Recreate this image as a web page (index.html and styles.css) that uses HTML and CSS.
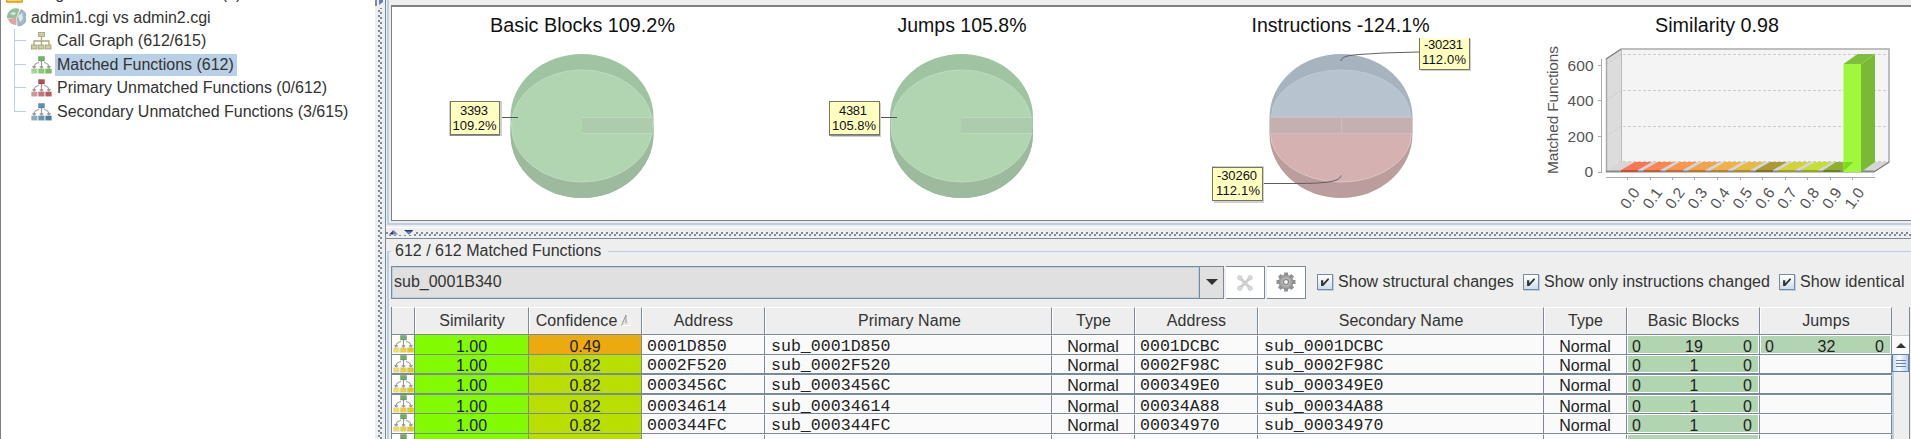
FILE: index.html
```html
<!DOCTYPE html>
<html lang="en">
<head>
<meta charset="utf-8">
<title>Matched Functions</title>
<link rel="stylesheet" href="styles.css">
</head>
<body>
<svg class="defs" aria-hidden="true">
  <defs>
    <symbol id="tree" viewBox="0 0 21 18">
      <path d="M10.5 5v7M8 6.5C5 7 3.300 8.500 3 11M13 6.500c3 .5 4.700 2 5 4.500M1.500 10 3 12l2-1.500M8.800 10.500l1.700 1.500 1.700-1.500M16 10.500l2 1.500 1.500-2" fill="none" stroke="#999" stroke-width="1.200"/>
      <rect x="7.500" y=".5" width="6" height="4.500" fill="currentColor" stroke="#0003" stroke-width=".8"/>
      <g stroke="#0002" stroke-width=".6"><rect x=".5" y="12.800" width="5.800" height="4.500" opacity=".65"/><rect x="7.500" y="12.800" width="5.800" height="4.500" opacity=".85"/><rect x="14.500" y="12.800" width="6" height="4.500"/></g>
    </symbol>
    <symbol id="callgraph" viewBox="0 0 21 18">
      <path d="M10.500 5v8M3 13V9h15v4" fill="none" stroke="#a9a878" stroke-width="1.300"/>
      <g fill="#cfcfa4" stroke="#9c9c72" stroke-width=".8"><rect x="7.500" y=".5" width="6" height="4"/><rect x=".5" y="13" width="5.500" height="4"/><rect x="7.500" y="13" width="5.500" height="4"/><rect x="14.500" y="13" width="5.500" height="4"/></g>
    </symbol>
    <symbol id="check" viewBox="0 0 16 16"><path d="M3.500 6h2.500v3.500L11 4h1.500v1.500L6 12.500H3.500z" fill="#333"/></symbol>
  </defs>
</svg>
<div class="app">
  <nav class="tree">
    <div class="node node-top"><svg class="folder" viewBox="0 0 17 16"><rect x=".5" y="1" width="16" height="14" rx="1" fill="#fbd66a" stroke="#e2921b" stroke-width="1.500"/></svg><span>Single Function Diff Views (0)</span></div>
    <div class="node root"><svg class="globe" viewBox="0 0 19 19"><path d="M9 9.500 0.500 10A8.500 8.500 0 0 1 12 1.200z" fill="#8fc397" stroke="#7aa583" stroke-width=".6"/><path d="M9.500 9.500V17A8 8 0 0 1 1 11z" fill="#e0a3a8"/><path d="M10.500 9.500 14 1.500A8.500 8.500 0 0 1 11 18z" fill="#9fb9c6" stroke="#8195a0" stroke-width=".6"/><path d="M3 6q3-3 6-1l-2 2zM11 8l4-3 1 6-3 3z" fill="#dcebe6"/></svg><span>admin1.cgi vs admin2.cgi</span></div>
    <div class="kids">
      <div class="node kid"><svg class="ico"><use href="#callgraph"/></svg><span>Call Graph (612/615)</span></div>
      <div class="node kid green"><svg class="ico"><use href="#tree"/></svg><span class="selected">Matched Functions (612)</span></div>
      <div class="node kid red"><svg class="ico"><use href="#tree"/></svg><span>Primary Unmatched Functions (0/612)</span></div>
      <div class="node kid blue"><svg class="ico"><use href="#tree"/></svg><span>Secondary Unmatched Functions (3/615)</span></div>
    </div>
  </nav>
  <div class="vsplit"><svg width="9" height="8" viewBox="0 0 9 8"><path d="M1 0v6" stroke="#223" /><path d="M4 0v5l4-3V0z" fill="#5f80c0"/></svg></div>
  <main>
    <section class="charts-pane">
      <div class="charts">
        <svg class="chart" viewBox="392 7 380 213">
          <text class="title" x="490" y="32" textLength="185" lengthAdjust="spacingAndGlyphs">Basic Blocks 109.2%</text>
          <path d="M510.500 117a71.500 63 0 0 1 143 0v17a71.500 64 0 0 1-143 0z" fill="#a0c4a2"/>
          <path d="M510.500 125v9a71.500 64 0 0 0 143 0v-9z" fill="#9dba9e"/>
          <ellipse cx="582" cy="126" rx="70.500" ry="56" fill="#b0d5b0" stroke="#bfdcc0"/>
          <path d="M582 117h70.500v16H582z" fill="#adcbad"/><path d="M653 117.500h-71M653 133.500h-71" stroke="#bddabd"/>
          <path d="M500 117.500h18" stroke="#555"/>
          <rect x="449" y="101" width="53" height="35" fill="#d0d0d0"/>
          <rect x="450.500" y="101.500" width="49" height="33" fill="#ffffc0" stroke="#77775f"/><path d="M450 135h50" stroke="#777" stroke-width="1.500"/>
          <text class="tip" x="460" y="115" textLength="28">3393</text><text class="tip" x="452.500" y="130" textLength="44">109.2%</text>
        </svg>
        <svg class="chart" viewBox="772 7 380 213">
          <text class="title" x="897.500" y="32" textLength="129" lengthAdjust="spacingAndGlyphs">Jumps 105.8%</text>
          <path d="M890 117a71.500 63 0 0 1 143 0v17a71.500 64 0 0 1-143 0z" fill="#a0c4a2"/>
          <path d="M890 125v9a71.500 64 0 0 0 143 0v-9z" fill="#9dba9e"/>
          <ellipse cx="961.500" cy="126" rx="70.500" ry="56" fill="#b0d5b0" stroke="#bfdcc0"/>
          <path d="M961.500 117h70.500v16h-70.500z" fill="#adcbad"/><path d="M1033 117.500h-71M1033 133.500h-71" stroke="#bddabd"/>
          <path d="M880 117.500h17" stroke="#555"/>
          <rect x="831" y="103" width="50" height="34" fill="#d0d0d0"/>
          <rect x="829.500" y="101.500" width="50" height="33" fill="#ffffc0" stroke="#77775f"/><path d="M829 135h51" stroke="#777" stroke-width="1.500"/>
          <text class="tip" x="839" y="115" textLength="28">4381</text><text class="tip" x="832" y="130" textLength="44">105.8%</text>
        </svg>
        <svg class="chart" viewBox="1152 7 380 213">
          <text class="title" x="1251.500" y="32" textLength="178" lengthAdjust="spacingAndGlyphs">Instructions -124.1%</text>
          <path d="M1269.500 117a71.500 63 0 0 1 143 0z" fill="#a7b3bf"/>
          <path d="M1269.500 117h143v17a71.500 64 0 0 1-143 0z" fill="#bb9d9e"/>
          <path d="M1271.500 117a69.500 47 0 0 1 139 0z" fill="#b7c3cf" stroke="#c0cad4"/>
          <path d="M1270.500 133a70.500 49 0 0 0 141 0z" fill="#d5b1b1" stroke="#dfc6c6"/>
          <path d="M1270 118h142v15h-142z" fill="#c5afb1"/><path d="M1269.500 117.500h143M1269.500 133.500h143M1341.500 118v15" stroke="#ccbdc0"/>
          <path d="M1341 61c1-7 16-6 42-8l36-1M1263 183.500h30c28 0 47-1 48-8" fill="none" stroke="#605c5c"/>
          <path d="M1421 39h50v32h-50z" fill="#d0d0d0"/><path d="M1419 38.500h51v31h-51z" fill="#ffffc0"/><path d="M1419.500 38v31.500h50V38" fill="none" stroke="#77775f"/>
          <text class="tip" x="1424" y="49" textLength="39">-30231</text><text class="tip" x="1422" y="64" textLength="44">112.0%</text>
          <path d="M1212 166h52v37h-50z" fill="#d0d0d0"/><rect x="1212.500" y="167.500" width="50" height="33" fill="#ffffc0" stroke="#77775f"/>
          <text class="tip" x="1217" y="180" textLength="40">-30260</text><text class="tip" x="1216" y="195" textLength="44">112.1%</text>
        </svg>
        <svg class="chart" viewBox="1532 7 380 213">
          <text class="title" x="1655" y="32" textLength="124" lengthAdjust="spacingAndGlyphs">Similarity 0.98</text>
          <path d="M1621 49h268v113h-268z" fill="#f4f4f4"/><path d="M1606 59l15-10v113l-15 10z" fill="#dcdcdc"/><path d="M1606 172l15-10h268l-15 10z" fill="#d6d6d6"/>
          <g fill="none" stroke="#ccc" stroke-dasharray="3 2"><path d="M1606 171.500l15-10h268M1606 136.500l15-10h268M1606 100.500l15-10h268M1606 64.500l15-10h268" /></g>
          <path d="M1606.500 172V59l15-10H1889v113l-15 10" fill="none" stroke="#aaa" stroke-width="1.500"/><path d="M1606 59l15-10M1874 172l15-10" stroke="#777"/><path d="M1621.500 49v113" stroke="#bbb"/>
          <path d="M1606 171.500h268" stroke="#888" stroke-width="2"/>
          <g>
            <path fill="#fa7650" d="M1621 170l14-8h17l-14 8z"/><path fill="#fa8650" d="M1643.500 170l14-8h17l-14 8z"/><path fill="#fa9650" d="M1666 170l14-8h17l-14 8z"/><path fill="#f5a34b" d="M1688.500 170l14-8h17l-14 8z"/><path fill="#f0b148" d="M1711 170l14-8h17l-14 8z"/><path fill="#e6bb42" d="M1733.500 170l14-8h17l-14 8z"/><path fill="#aa9936" d="M1756 170l14-8h17l-14 8z"/><path fill="#d2d23a" d="M1778.500 170l14-8h17l-14 8z"/><path fill="#c6de36" d="M1801 170l14-8h17l-14 8z"/><path fill="#8eae34" d="M1822 171l14-9h17l-10 9z"/>
          </g>
          <g stroke-width="2"><path stroke="#bd5339" d="M1621 171h17"/><path stroke="#bd6139" d="M1643.500 171h17"/><path stroke="#bd6d39" d="M1666 171h17"/><path stroke="#b87835" d="M1688.500 171h17"/><path stroke="#b48233" d="M1711 171h17"/><path stroke="#ad8b30" d="M1733.500 171h17"/><path stroke="#807327" d="M1756 171h17"/><path stroke="#9e9e2b" d="M1778.500 171h17"/><path stroke="#94a628" d="M1801 171h17"/><path stroke="#698226" d="M1823.500 171h17"/></g>
          <path d="M1843.500 64l14-10H1875l-13 10z" fill="#80bc3e"/><path d="M1861 64l14-10v108l-14 10z" fill="#79b934"/><path d="M1843.500 64h17.500v108h-17.500z" fill="#a0f83c"/><path d="M1843.500 171l1-9h9l-2 2z" fill="#7ed91c"/><path d="M1861.500 64l13-9.500" stroke="#9acb62"/>
          <g stroke="#aaa" fill="none"><path d="M1601.500 59v113M1598 65.500h4M1598 100.500h4M1598 136.500h4M1598 172.500h4M1606 177.500h269"/><path d="M1627.500 178v2M1650.500 178v2M1672.500 178v2M1694.500 178v2M1717.500 178v2M1740.500 178v2M1762.500 178v2M1785.500 178v2M1807.500 178v2M1830.500 178v2M1852.500 178v2"/></g>
          <g class="axis"><text x="1567.500" y="70.500" textLength="26">600</text><text x="1567.500" y="105.500" textLength="26">400</text><text x="1567.500" y="141.500" textLength="26">200</text><text x="1584.500" y="177">0</text>
            <text class="ylabel" transform="translate(1558 174) rotate(-90)" textLength="128">Matched Functions</text>
            <text transform="translate(1628 210) rotate(-55)">0.0</text><text transform="translate(1650.500 210) rotate(-55)">0.1</text><text transform="translate(1673 210) rotate(-55)">0.2</text><text transform="translate(1695.500 210) rotate(-55)">0.3</text><text transform="translate(1718 210) rotate(-55)">0.4</text><text transform="translate(1740.500 210) rotate(-55)">0.5</text><text transform="translate(1763 210) rotate(-55)">0.6</text><text transform="translate(1785 210) rotate(-55)">0.7</text><text transform="translate(1807.500 210) rotate(-55)">0.8</text><text transform="translate(1830 210) rotate(-55)">0.9</text><text transform="translate(1852.500 210) rotate(-55)">1.0</text></g>
        </svg>
      </div>
    </section>
    <div class="hsplit"><svg width="25" height="5" viewBox="0 0 25 5"><path d="M0 4.500 4.500 0v4.500zM15 0h9.500L20 4.500z" fill="#2f3b63"/><path d="M4.500 0 9 4.500H4.500zM17 1.500h6L20 4.500z" fill="#6382bf"/></svg></div>
    <section class="group">
      <div class="legend">612 / 612 Matched Functions</div>
      <div class="toolbar">
        <div class="combo"><span class="combo-value">sub_0001B340</span><span class="combo-arrow"></span></div>
        <div class="btn"><svg width="16" height="16" viewBox="0 0 16 16"><path d="M3 3l10 10M13 3 3 13" stroke="#cdcdcd" stroke-width="3"/><g fill="#d8d8d8" stroke="#c4c4c4" stroke-width=".6"><circle cx="2.800" cy="2.800" r="2.300"/><circle cx="13.200" cy="2.800" r="2.300"/><circle cx="2.800" cy="13.200" r="2.300"/><circle cx="13.200" cy="13.200" r="2.300"/></g></svg></div>
        <div class="btn btn-gear"><svg width="20" height="20" viewBox="0 0 20 20"><g stroke="#929292" stroke-width="4"><path d="M10 .5v19M.5 10h19M3.300 3.300l13.400 13.400M16.700 3.300 3.300 16.700"/></g><circle cx="10" cy="10" r="7" fill="#a3a3a3" stroke="#8c8c8c"/><circle cx="10" cy="10" r="4.500" fill="#b5b5b5"/><circle cx="10" cy="10" r="2.500" fill="#f5f5f5" stroke="#777"/></svg></div>
        <label class="opt opt-a"><svg class="box"><use href="#check"/></svg>Show structural changes</label>
        <label class="opt opt-b"><svg class="box"><use href="#check"/></svg>Show only instructions changed</label>
        <label class="opt opt-c"><svg class="box"><use href="#check"/></svg>Show identical</label>
      </div>
      <div class="table-wrap">
        <div class="table">
          <div class="row head"><div></div><div>Similarity</div><div class="sorted">Confidence<svg class="sort" width="10" height="11" viewBox="0 0 10 11"><path d="M5 0 9.500 10.500H0" fill="#e4e4e4" stroke="#fff"/><path d="M5 0 .5 10.500M5 0v8" stroke="#999" fill="none"/></svg></div><div>Address</div><div>Primary Name</div><div>Type</div><div>Address</div><div>Secondary Name</div><div>Type</div><div>Basic Blocks</div><div>Jumps</div></div>
          <div class="row"><div class="fi"><svg class="ico"><use href="#tree"/></svg></div><div class="sim">1.00</div><div class="conf low">0.49</div><div class="mono">0001D850</div><div class="mono">sub_0001D850</div><div>Normal</div><div class="mono">0001DCBC</div><div class="mono">sub_0001DCBC</div><div>Normal</div><div class="tri"><i>0</i><i>19</i><i>0</i></div><div class="tri"><i>0</i><i>32</i><i>0</i></div></div>
          <div class="row thick"><div class="fi"><svg class="ico"><use href="#tree"/></svg></div><div class="sim">1.00</div><div class="conf">0.82</div><div class="mono">0002F520</div><div class="mono">sub_0002F520</div><div>Normal</div><div class="mono">0002F98C</div><div class="mono">sub_0002F98C</div><div>Normal</div><div class="tri"><i>0</i><i>1</i><i>0</i></div><div></div></div>
          <div class="row thick"><div class="fi"><svg class="ico"><use href="#tree"/></svg></div><div class="sim">1.00</div><div class="conf">0.82</div><div class="mono">0003456C</div><div class="mono">sub_0003456C</div><div>Normal</div><div class="mono">000349E0</div><div class="mono">sub_000349E0</div><div>Normal</div><div class="tri"><i>0</i><i>1</i><i>0</i></div><div></div></div>
          <div class="row short"><div class="fi"><svg class="ico"><use href="#tree"/></svg></div><div class="sim">1.00</div><div class="conf">0.82</div><div class="mono">00034614</div><div class="mono">sub_00034614</div><div>Normal</div><div class="mono">00034A88</div><div class="mono">sub_00034A88</div><div>Normal</div><div class="tri"><i>0</i><i>1</i><i>0</i></div><div></div></div>
          <div class="row"><div class="fi"><svg class="ico"><use href="#tree"/></svg></div><div class="sim">1.00</div><div class="conf">0.82</div><div class="mono">000344FC</div><div class="mono">sub_000344FC</div><div>Normal</div><div class="mono">00034970</div><div class="mono">sub_00034970</div><div>Normal</div><div class="tri"><i>0</i><i>1</i><i>0</i></div><div></div></div>
          <div class="row"><div class="fi"><svg class="ico"><use href="#tree"/></svg></div><div class="sim"></div><div class="conf"></div><div></div><div></div><div></div><div></div><div></div><div></div><div class="tri"></div><div></div></div>
        </div>
        <div class="scroll"><div class="corner"></div><div class="up"></div><div class="thumb"><b></b><b></b><b></b></div><div class="track"></div></div>
      </div>
    </section>
  </main>
</div>
</body>
</html>
```
FILE: styles.css
```css
* { box-sizing: border-box; }
html { height: 439px; overflow: hidden; }
body { margin: 0; height: 439px; overflow: hidden; background: #eee; color: #333; font: 16px "Liberation Sans", Arial, sans-serif; }
.defs { position: absolute; width: 0; height: 0; }
.app { display: grid; grid-template-columns: 375px 11px 1fr; grid-template-rows: 439px; height: 439px; overflow: hidden; }

.tree { background: #fff; border-left: 1px solid #808080; overflow: hidden; white-space: nowrap; }
.node { display: flex; align-items: center; height: 23px; }
.node-top { margin-top: -18px; height: 24px; padding-left: 5px; gap: 9px; align-items: flex-start; }
.node-top span { line-height: 24px; }
.folder { width: 17px; height: 16px; margin-top: 5px; }
.root { padding-left: 6px; gap: 5px; }
.globe { width: 19px; height: 19px; }
.kids { margin-left: 13px; height: 83px; border-left: 1px solid #b8cfe5; }
.kid { padding-left: 16px; height: 23.700px; position: relative; }
.kid::before { content: ""; position: absolute; left: 0; top: 11px; width: 11px; border-top: 1px solid #b8cfe5; }
.kid span { padding: 0 2px; margin-left: 3px; height: 22px; line-height: 22px; color: #333; letter-spacing: -.01px; }
.kid .selected { background: #b8cfe5; padding-right: 3px; }
.ico { width: 21px; height: 18px; flex: none; }
.green { color: #73b368; } .green .ico { fill: #79bd5b; }
.red { color: #b94a50; } .red .ico { fill: #bd5a60; }
.blue { color: #5b8fb3; } .blue .ico { fill: #4f7ea3; }

.vsplit { border-right: 1px solid #7a8a99; background: radial-gradient(circle at 4px 1px, #7a8a99 .8px, transparent 1px), radial-gradient(circle at 6px 3px, #7a8a99 .8px, transparent 1px), #eee; background-size: 11px 5px; }
.vsplit svg { display: block; background: #eee; }
main { display: flex; flex-direction: column; min-width: 0; overflow: hidden; }
.charts-pane { margin-left: 1px; height: 225px; flex: none; padding: 5px 0 2px 2px; border-left: 2px solid #b8cfe5; border-bottom: 2px solid #b8cfe5; }
.charts { display: flex; height: 216px; border: 1px solid #808080; border-top-width: 2px; border-right: 0; background: #fff; overflow: hidden; }
.chart { width: 380px; height: 213px; flex: none; }
.title { font-size: 20px; fill: #111; }
.tip { font-size: 13px; fill: #111; }
.axis { font-size: 15.500px; fill: #555; }
.ylabel { font-size: 15.500px; }

.hsplit { height: 14px; flex: none; padding: 5px 0 0 3px; border-bottom: 1px solid #7a8a99; background: linear-gradient(#fff, #fff) 0 2px / 100% 1px no-repeat, radial-gradient(circle at 1px 8px, #7a8a99 .9px, transparent 1.200px) 0 0 / 5px 14px, radial-gradient(circle at 4px 10px, #7a8a99 .7px, transparent 1px) 0 0 / 5px 14px; }
.hsplit svg { display: block; background: #eee; }

.group { position: relative; margin: 12px 0 0 1px; padding: 14px 0 0 2px; border-top: 1px solid #b8cfe5; border-left: 2px solid #b8cfe5; height: 188px; flex: none; }
.legend { position: absolute; left: 2px; top: -10px; padding: 0 7px 0 4px; line-height: 18px; background: #eee; white-space: nowrap; }
.toolbar { display: flex; align-items: center; height: 33px; white-space: nowrap; }
.combo { display: flex; width: 833px; height: 33px; flex: none; border: 1px solid #7a8a99; background: #e0e0e0; }
.combo-value { flex: 1; padding-left: 1px; line-height: 28px; border: 1px solid #b8cfe5; }
.combo-arrow { display: flex; align-items: center; justify-content: center; width: 24px; padding-bottom: 1px; border-left: 1px solid #7a8a99; }
.combo-arrow::after { content: ""; border: 6px solid transparent; border-top-color: #333; border-bottom: 0; }
.btn { display: flex; align-items: center; justify-content: center; width: 39px; height: 33px; margin-left: 2px; border: 1px solid #7a8a99; border-left: 0; background: #fff; flex: none; }
.btn-gear { padding-bottom: 2px; }
.opt { display: flex; align-items: center; gap: 5px; line-height: 18px; margin-bottom: 1px; letter-spacing: .03px; }
.opt-a { margin-left: 11px; width: 206px; } .opt-b { width: 256px; }
.opt-c { letter-spacing: .1px; }
.box { width: 16px; height: 16px; border: 1px solid #7a8a99; box-shadow: 1px 1px #b8cfe5; background: linear-gradient(#fff, #cfdeeb); flex: none; }

.table-wrap { display: flex; margin-top: 8px; height: 132px; overflow: hidden; border-left: 1px solid #7a8a99; }
.table { width: 1500px; flex: none; }
.row { display: grid; grid-template-columns: 23px 114px 113px 123px 287px 83px 123px 286px 83px 133px 132px; height: 20px; border-bottom: 1px solid #7a8a99; }
.row > div { border-right: 1px solid #7a8a99; border-top: 1px solid #fff; background: #fafafa; height: 100%; overflow: hidden; text-align: center; line-height: 22px; color: #222; }
.row.thick { border-bottom-width: 2px; }
.row.thick > div { line-height: 20px; }
.row.short { height: 19px; }
.row.short > div, .row.short + .row > div { line-height: 21px; }
.row.head { height: 28px; }
.row.head > div { border-left: 1px solid #fff; background: #eee; line-height: 26px; color: #333; white-space: nowrap; letter-spacing: .08px; }
.row.head > div:first-child { border-left: 0; }
.row.head > div:nth-child(5) { padding-left: 2px; }
.row.head .sorted { padding-right: 4px; }
.sort { margin-left: 4px; }
.row .mono { text-align: left; padding-left: 5px; font-family: "Liberation Mono", "DejaVu Sans Mono", monospace; font-size: 16.600px; white-space: pre; }
.row > .mono:nth-child(5), .row > .mono:nth-child(8) { padding-left: 6px; }
.row .sim { background: #82fa00; border-top-color: #82fa00; }
.row .conf { background: #b9df00; border-top-color: #b9df00; }
.row .low { background: #ebaa10; border-top-color: #ebaa10; }
.row .fi { background: #fff; color: #6cb063; border-top: 0; }
.fi .ico { display: block; margin-left: 1px; fill: #e2ca18; }
.row .tri { display: grid; grid-template-columns: 20px 1fr 20px; padding: 0 5px; background: #b0d5b0; box-shadow: inset 1px 0 #fff, inset -1px 0 #fff, inset 0 -1px #fff; }
.tri i { font-style: normal; text-align: left; }
.tri i:nth-child(2) { text-align: center; padding-left: 2px; }
.tri i:last-child { text-align: right; padding-right: 2px; }

.scroll { width: 18px; flex: none; border-right: 1px solid #7a8a99; }
.corner { height: 29px; border-bottom: 1px solid #ccc; }
.up { display: flex; align-items: center; justify-content: center; height: 18px; background: #fafafa; }
.up::after { content: ""; border: 5px solid transparent; border-bottom-color: #333; border-top: 0; }
.thumb { display: flex; flex-direction: column; justify-content: center; gap: 2px; height: 18px; padding: 0 2px 0 3px; border: 1px solid #6382bf; background: linear-gradient(90deg, #c8dcef, #fff 40%, #b8cfe5); }
.thumb b { height: 1px; background: #6382bf; }
.track { height: 67px; border-left: 2px solid #b8cfe5; }
```
